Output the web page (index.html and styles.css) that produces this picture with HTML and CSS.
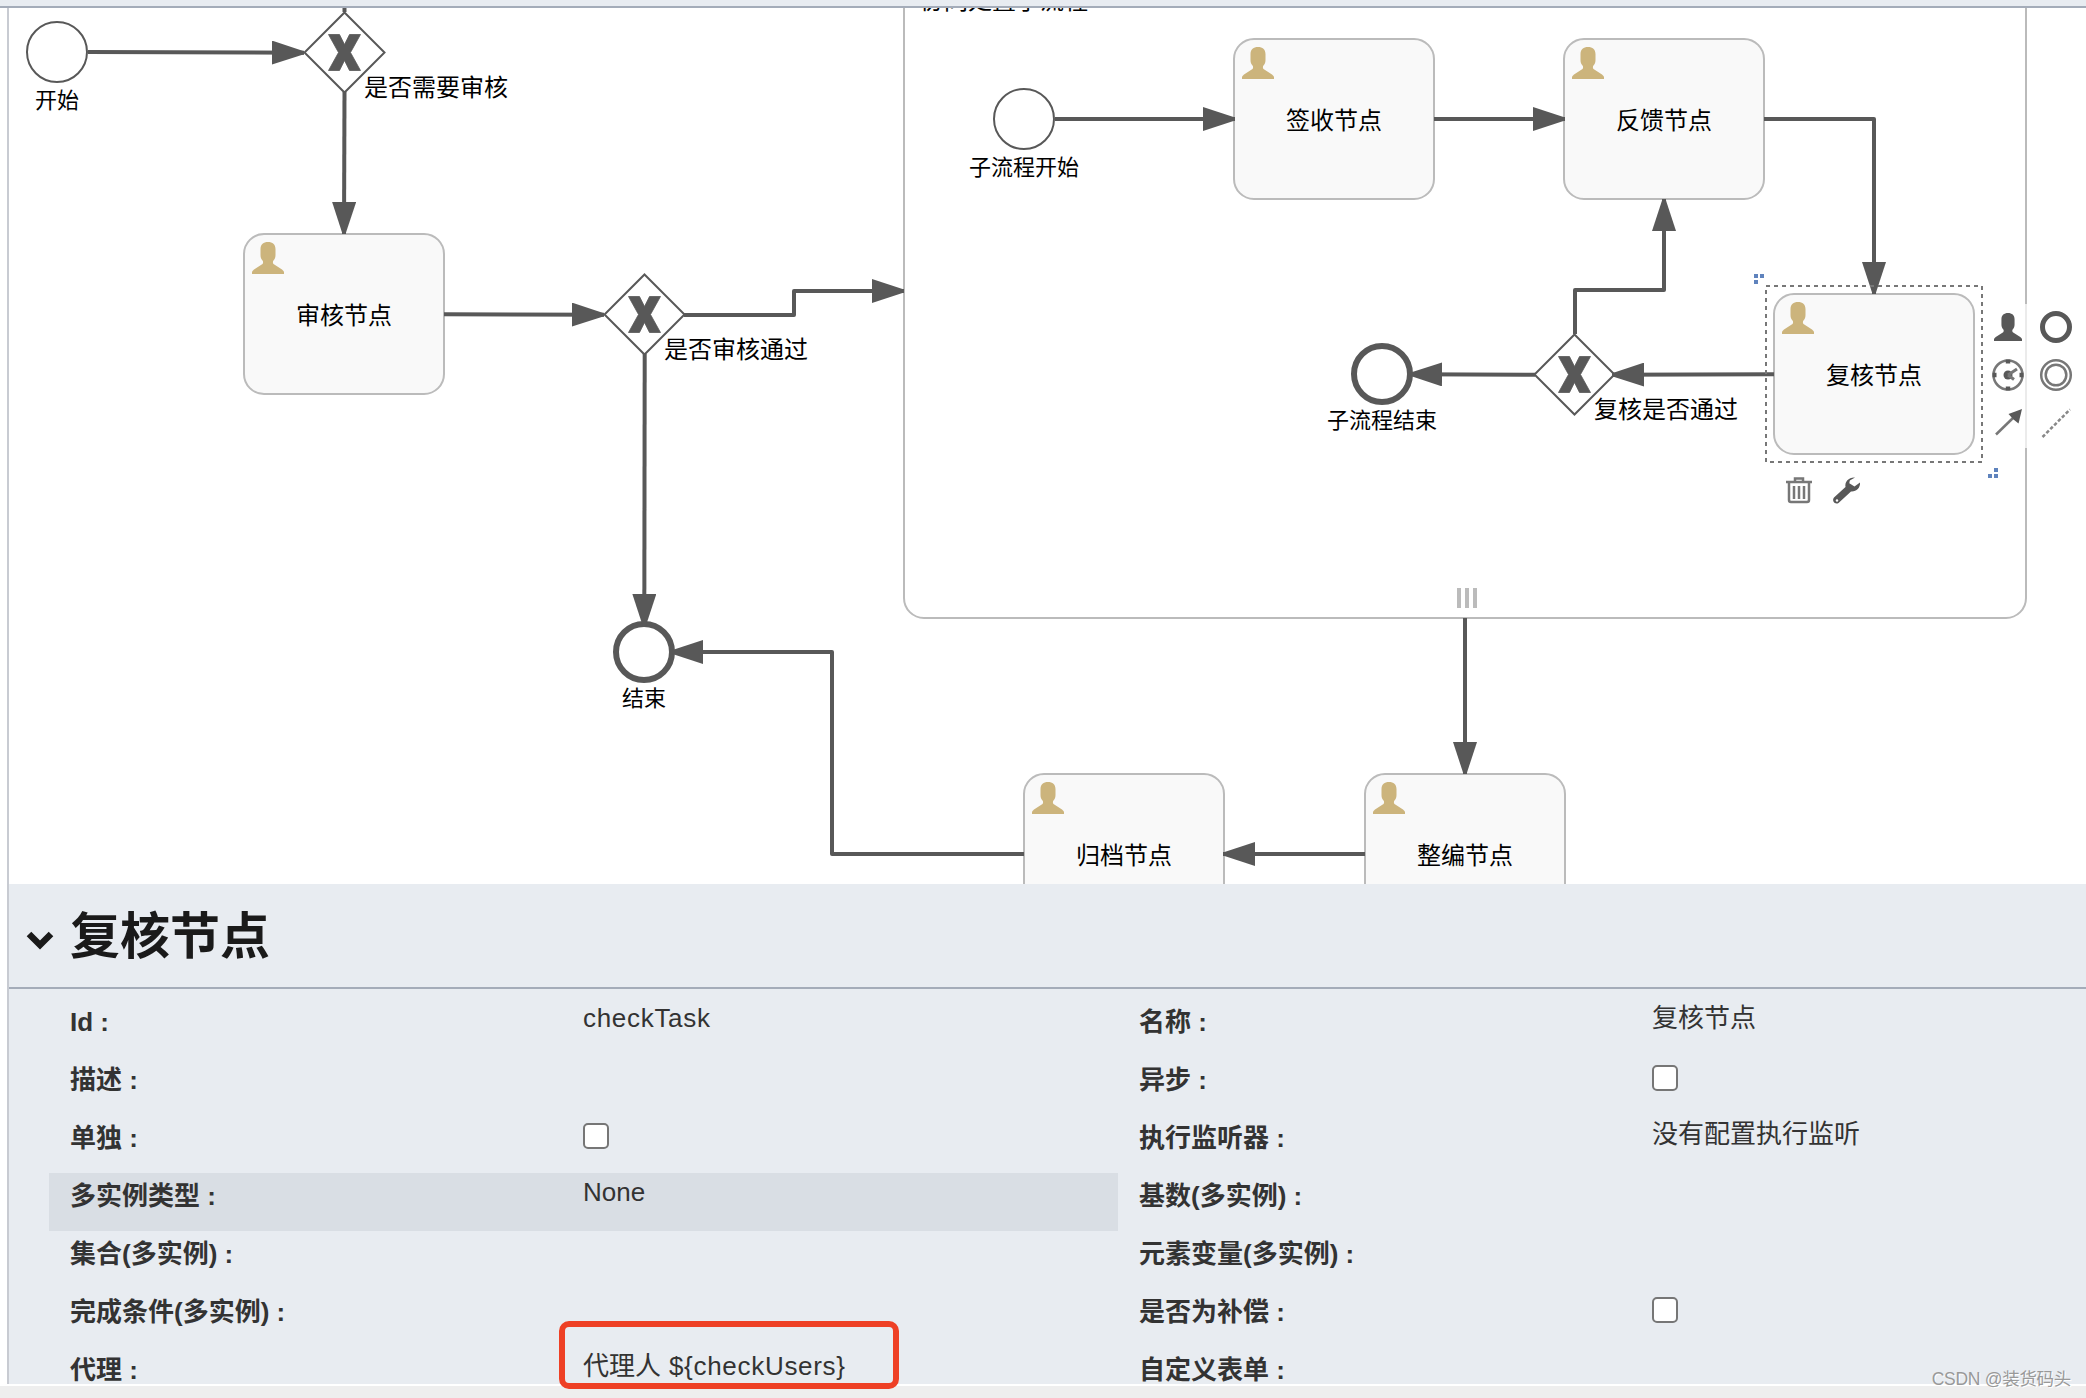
FILE: index.html
```
<!DOCTYPE html>
<html lang="zh-CN">
<head>
    <meta charset="UTF-8">
    <meta name="viewport" content="width=device-width, initial-scale=1.0">
    <title>流程设计器</title>
    <link rel="stylesheet" href="styles.css">
</head>
<body>
    <div class="toolbar"></div>

    <div class="editor">
        <!-- 流程画布 -->
        <svg class="canvas" width="2077" height="876" viewBox="9 8 2077 876">
            <defs>
                <marker id="arrow" markerUnits="userSpaceOnUse" markerWidth="34" markerHeight="24" refX="32" refY="12" orient="auto">
                    <path d="M0 0L32 10.5V13.5L0 24z" fill="#585858" />
                </marker>
                <path id="user" d="M16 0C11.500 0 8.500 2.500 8.500 7v6c0 2 .5 4 2 5.500.8 1 .8 2.500 0 3.500L2 27.500Q0 29 0 30v2h32v-2q0-1-2-2.500L21.500 22c-.8-1-.8-2.500 0-3.500 1.500-1.500 2-3.500 2-5.500V7C23.500 2.500 20.500 0 16 0z" />
                <g id="gateway">
                    <path class="thin" d="M0-40L40 0 0 40-40 0z" />
                    <path class="cross" d="M-16-18H-5L0-8 5-18H16L6 0 16 18H5L0 8-5 18H-16L-6 0z" />
                </g>
                <g id="task">
                    <rect class="box" width="200" height="160" rx="20" />
                    <use href="#user" class="user" x="8" y="8" />
                </g>
            </defs>

            <!-- 子流程 -->
            <rect class="subprocess" x="904" y="-30" width="1122" height="648" rx="20" />
            <text class="name" x="920" y="8.500">协同处置子流程</text>
            <path class="multi" d="M1459 588v20M1467 588v20M1475 588v20" />

            <!-- 节点 -->
            <circle class="thin" cx="57" cy="52" r="30" />
            <use href="#gateway" x="344.500" y="52.500" />
            <use href="#task" x="244" y="234" />
            <use href="#gateway" x="644.500" y="314.500" />
            <circle class="thick" cx="644" cy="652" r="28" />
            <circle class="thin" cx="1024" cy="119" r="30" />
            <use href="#task" x="1234" y="39" />
            <use href="#task" x="1564" y="39" />
            <use href="#task" x="1774" y="294" />
            <use href="#gateway" x="1574.500" y="374.500" />
            <circle class="thick" cx="1382" cy="374" r="28" />
            <use href="#task" x="1024" y="774" />
            <use href="#task" x="1365" y="774" />

            <!-- 连线 -->
            <g class="flows">
                <path d="M88 52L304 52.700" />
                <path class="plain" d="M344.500 0V12" />
                <path d="M344.500 92L344 234" />
                <path d="M444 314.300L604 314.700" />
                <path d="M684 315H794V291H904" />
                <path d="M644.700 354L644.300 626" />
                <path d="M1024 854H832V652H671" />
                <path d="M1055 119H1235" />
                <path d="M1434 119H1565" />
                <path d="M1764 119H1874V294" />
                <path d="M1774 374.300L1612 374.700" />
                <path d="M1535 374.700L1410 374.300" />
                <path d="M1575 334V290H1664V199" />
                <path d="M1465 618V774" />
                <path d="M1365 854H1223" />
            </g>

            <!-- 名称 -->
            <g class="label">
                <text x="57" y="107.500">开始</text>
                <text x="644" y="705.500">结束</text>
                <text x="1024" y="174.500">子流程开始</text>
                <text x="1382" y="427.500">子流程结束</text>
            </g>
            <g class="name">
                <text x="364" y="96">是否需要审核</text>
                <text x="664" y="357.500">是否审核通过</text>
                <text x="1594" y="417.500">复核是否通过</text>
            </g>
            <g class="name middle">
                <text x="344" y="323.500">审核节点</text>
                <text x="1334" y="128.500">签收节点</text>
                <text x="1664" y="128.500">反馈节点</text>
                <text x="1874" y="383.500">复核节点</text>
                <text x="1124" y="863.500">归档节点</text>
                <text x="1465" y="863.500">整编节点</text>
            </g>

            <!-- 选中框 -->
            <rect class="selection" x="1766" y="286" width="216" height="176" />
            <path class="handle" d="M1754 274h4v4h-4zM1760 274h4v4h-4zM1754 280h4v4h-4zM1994 468h4v4h-4zM1988 474h4v4h-4zM1994 474h4v4h-4z" />

            <!-- 快捷菜单 -->
            <rect class="menu-bg" x="1990" y="304" width="94" height="144" />
            <use href="#user" class="dark" transform="translate(1994 313) scale(.875)" />
            <circle class="icon" cx="2056" cy="327" r="13.500" stroke-width="5" />
            <circle class="icon light" cx="2008" cy="375" r="14.500" stroke-width="2.500" />
            <path class="icon" stroke-width="4.500" d="M2008 359.500v4M2008 386.500v4M1992.500 375h4M2019.500 375h4" />
            <circle class="dark" cx="2008" cy="375" r="4.500" />
            <path class="icon light" stroke-width="3" d="M2008 375l9-6M2008 375l6 4.500" />
            <circle class="icon light" cx="2056" cy="375" r="14.800" stroke-width="2.500" />
            <circle class="icon light" cx="2056" cy="375" r="10.300" stroke-width="2.500" />
            <path class="icon light" stroke-width="2.500" d="M1996 434.500L2014 417" />
            <path class="dark" d="M2022 409l-3.500 14.500-5-4-5-5.500z" />
            <path class="icon dots" d="M2042.500 437L2070 409.500" />
            <path class="icon light" stroke-width="2.500" d="M1786 482h26M1795 481v-2.500h8V481M1789 483v17q0 2 2 2h16q2 0 2-2v-17M1794 486v13M1799 486v13M1804 486v13" />
            <path class="dark" d="M1855 477.500c-6-.5-10.500 4-9.500 9.500l-11.500 10.500c-2.500 3 .8 7.500 4.500 5.500l12.500-11.500c5 .5 9.500-3.500 9-9l-5.500 4-5.200-3.200.5-2.800z" />
            <circle cx="1837" cy="500.500" r="1.200" fill="#fff" />
        </svg>

        <!-- 属性面板 -->
        <div class="panel">
            <div class="panel-title">
                <svg class="chevron" width="28" height="20" viewBox="0 0 28 20"><path d="M3 4l11 11L25 4" /></svg>
                <h2>复核节点</h2>
            </div>
            <div class="properties">
                <div class="property"><span class="key">Id :</span><span class="value latin">checkTask</span></div>
                <div class="property"><span class="key">名称 :</span><span class="value">复核节点</span></div>
                <div class="property"><span class="key">描述 :</span></div>
                <div class="property"><span class="key">异步 :</span><input type="checkbox"></div>
                <div class="property"><span class="key">单独 :</span><input type="checkbox"></div>
                <div class="property"><span class="key">执行监听器 :</span><span class="value">没有配置执行监听</span></div>
                <div class="property active"><span class="key">多实例类型 :</span><span class="value">None</span></div>
                <div class="property"><span class="key">基数(多实例) :</span></div>
                <div class="property"><span class="key">集合(多实例) :</span></div>
                <div class="property"><span class="key">元素变量(多实例) :</span></div>
                <div class="property"><span class="key">完成条件(多实例) :</span></div>
                <div class="property"><span class="key">是否为补偿 :</span><input type="checkbox"></div>
                <div class="property"><span class="key">代理 :</span><span class="value">代理人<span class="latin"> ${checkUsers}</span></span></div>
                <div class="property"><span class="key">自定义表单 :</span></div>
            </div>
        </div>
    </div>

    <div class="highlight"></div>
    <div class="watermark">CSDN @装货码头</div>
</body>
</html>
```
FILE: styles.css
```
* {
    margin: 0;
    padding: 0;
    box-sizing: border-box;
}

body {
    position: relative;
    height: 1398px;
    overflow: hidden;
    background: #eee;
    font-family: "Liberation Sans", "Noto Sans CJK SC", sans-serif;
    color: #333;
}

.toolbar {
    height: 8px;
    background: #e8ecf1;
    border-bottom: 2px solid #a4acb9;
}

.editor {
    height: 1378px;
    padding-left: 7px;
    background: #fff;
    border-bottom: 2px solid #fff;
    overflow: hidden;
}

/* 画布 */
.canvas {
    display: block;
    box-sizing: content-box;
    border-left: 2px solid #c8cbd2;
    background: #fff;
}

.canvas text {
    fill: #000;
}

.thin {
    fill: #fff;
    stroke: #585858;
    stroke-width: 2;
}

.thick {
    fill: #fff;
    stroke: #585858;
    stroke-width: 6;
}

.cross,
.dark {
    fill: #585858;
}

.cross {
    stroke: #585858;
    stroke-width: 0.8;
}

.user {
    fill: #ccb47c;
}

.box {
    fill: #f9f9f9;
    stroke: #bbb;
    stroke-width: 2;
}

.subprocess {
    fill: #fff;
    stroke: #bbb;
    stroke-width: 2;
}

.multi {
    stroke: #bbb;
    stroke-width: 4;
}

.flows path {
    fill: none;
    stroke: #585858;
    stroke-width: 4;
    stroke-linejoin: round;
    marker-end: url(#arrow);
}

.flows .plain {
    marker-end: none;
}

.label {
    font-size: 22px;
    text-anchor: middle;
}

.name {
    font-size: 24px;
}

.middle {
    text-anchor: middle;
}

.selection {
    fill: none;
    stroke: #777;
    stroke-width: 2;
    stroke-dasharray: 4 4;
}

.handle {
    fill: #5f83bd;
}

.menu-bg {
    fill: rgba(255, 255, 255, 0.7);
}

.icon {
    fill: none;
    stroke: #585858;
}

.light {
    stroke: #777;
}

.dots {
    stroke: #888;
    stroke-width: 2.5;
    stroke-dasharray: 3.5 2;
}

/* 属性面板 */
.panel {
    height: 500px;
    background: #e8ecf1;
    border-left: 2px solid #c8cbd2;
}

.panel-title {
    display: flex;
    align-items: center;
    gap: 16px;
    height: 105px;
    padding-left: 17px;
    border-bottom: 2px solid #a4acb9;
}

.panel-title h2 {
    padding-top: 2px;
    font-size: 50px;
    line-height: 60px;
    color: #1a1a1a;
}

.chevron {
    margin-top: 9px;
    fill: none;
    stroke: #1a1a1a;
    stroke-width: 6.5;
}

.properties {
    display: grid;
    grid-template-columns: 1069px 1069px;
    grid-auto-rows: 58px;
    padding: 10px 0 0 40px;
}

.property {
    display: grid;
    grid-template-columns: 513px 1fr;
    align-items: start;
    padding-left: 21px;
    font-size: 26px;
    line-height: 38px;
}

.property.active {
    background: #d9dee4;
}

.key {
    padding-top: 4px;
    font-weight: bold;
}

.latin {
    letter-spacing: 0.7px;
}

.property input {
    width: 26px;
    height: 26px;
    margin-top: 8px;
    appearance: none;
    background: #fff;
    border: 2px solid #767676;
    border-radius: 5px;
}

.highlight {
    position: absolute;
    left: 559px;
    top: 1321px;
    width: 340px;
    height: 68px;
    border: 6px solid #ee4025;
    border-radius: 10px;
}

.watermark {
    position: absolute;
    right: 15px;
    bottom: 6px;
    font-size: 17.5px;
    line-height: 26px;
    letter-spacing: -0.3px;
    color: #999;
    text-shadow: 1px 1px 0 #fff;
}
```
